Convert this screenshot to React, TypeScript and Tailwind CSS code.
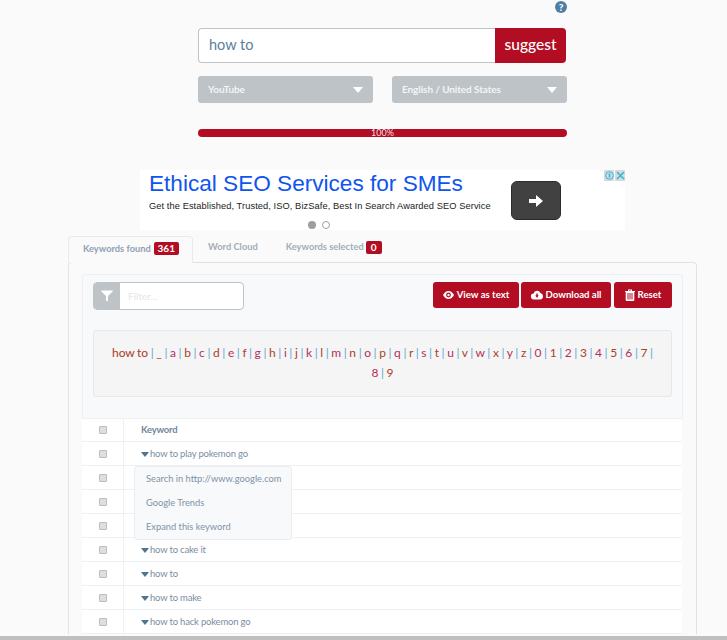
const letters = ['_', ...'abcdefghijklmnopqrstuvwxyz0123456789'.split('')]

const rows = ['how to play pokemon go', '', '', '', 'how to cake it', 'how to', 'how to make', 'how to hack pokemon go']

function Select({ label }: { label: string }) {
  return (
    <div className="flex h-[27px] w-[175px] items-center justify-between rounded-[3px] bg-[#bdc3c7] px-[10px] text-[10px] font-bold tracking-[-0.1px] text-[#f4f5f5]">
      <span>{label}</span>
      <span className="inline-block h-0 w-0 border-x-[5px] border-t-[6px] border-x-transparent border-t-white" />
    </div>
  )
}

function ActionButton({ icon, label, width }: { icon: React.ReactNode; label: string; width: string }) {
  return (
    <div className={`flex h-[26px] items-center justify-center gap-[3px] rounded-[3px] bg-[#b20d23] text-[9.6px] font-bold text-white ${width}`}>
      {icon}
      <span>{label}</span>
    </div>
  )
}

function CheckCell() {
  return (
    <div className="flex w-[42px] items-center justify-center border-r border-[#eef0f2]">
      <span className="h-[8px] w-[8px] rounded-[1px] border border-[#bdbdbd] bg-[#dedede]" />
    </div>
  )
}

export default function App() {
  return (
    <div className="relative h-[640px] w-[727px] overflow-hidden bg-[#fafafa] font-['Lato',sans-serif]">
      <div className="flex h-[28px] justify-end pr-[160px] pt-px">
        <span className="flex h-[12px] w-[12px] items-center justify-center rounded-full bg-[#4f7ea3] text-[10px] font-black leading-none text-white">?</span>
      </div>

      <div className="ml-[198px] flex h-[35px] w-[368px]">
        <div className="flex flex-1 items-center rounded-l-[4px] border border-r-0 border-[#bdc3c7] bg-white pb-[2px] pl-[10px] text-[14.5px] text-[#5b7f9c]">how to</div>
        <div className="flex w-[71px] items-center justify-center rounded-r-[4px] bg-[#b20d23] pb-[1px] text-[15.5px] font-medium text-white">suggest</div>
      </div>

      <div className="ml-[198px] mt-[13px] flex gap-[19px]">
        <Select label="YouTube" />
        <Select label="English / United States" />
      </div>

      <div className="ml-[198px] mt-[26px] flex h-[8px] w-[369px] items-center justify-center rounded-[4px] bg-[#b20d23] pb-[1px] text-[9px] leading-none text-[#f3dfe2]">100%</div>

      {/* ad */}
      <div className="relative ml-[140px] mt-[33px] h-[60px] w-[485px] bg-white font-['Liberation_Sans',sans-serif]">
        <div className="pl-[9px] pt-px text-[22.6px] leading-[26px] text-[#0f55f0]">Ethical SEO Services for SMEs</div>
        <div className="pl-[9px] pt-[3px] text-[9.3px] leading-[12px] tracking-[0.07px] text-[#222]">Get the Established, Trusted, ISO, BizSafe, Best In Search Awarded SEO Service</div>
        <div className="absolute left-[371px] top-[11px] flex h-[39px] w-[50px] items-center justify-center rounded-[6px] border border-[#2c2c2c] bg-[#414141]">
          <svg width="14" height="12" viewBox="0 0 14 12"><path d="M0 4h7V0l7 6-7 6V8H0z" fill="#fff" /></svg>
        </div>
        <div className="absolute left-[168px] top-[51px] flex gap-[6px]">
          <span className="h-[8px] w-[8px] rounded-full bg-[#9e9e9e]" />
          <span className="h-[8px] w-[8px] rounded-full border border-[#9e9e9e] bg-white" />
        </div>
        <div className="absolute right-0 top-0 flex gap-px">
          <span className="flex h-[11px] w-[10px] items-center justify-center bg-[#d5dbdd]">
            <svg width="9" height="9" viewBox="0 0 9 9" fill="none" stroke="#2fb8d6" strokeWidth="1"><circle cx="4.500" cy="4.500" r="3.800" /><path d="M4.500 2.500v4" strokeWidth="1.600" /></svg>
          </span>
          <span className="flex h-[11px] w-[10px] items-center justify-center bg-[#d5dbdd]">
            <svg width="9" height="9" viewBox="0 0 9 9" fill="none" stroke="#2fb8d6" strokeWidth="1.500"><path d="M1 1l7 7M8 1l-7 7" /></svg>
          </span>
        </div>
      </div>

      {/* tabs */}
      <div className="ml-[68px] mt-[6px] flex h-[26px] items-end text-[9.3px] font-bold text-[#a3adb8]">
        <div className="z-10 -mb-px flex h-[27px] w-[125px] items-center gap-[3px] rounded-t-[4px] border border-b-0 border-[#e6eaee] bg-[#fafafa] pb-[3px] pl-[14px] text-[#8ea1b5]">
          Keywords found
          <span className="w-[25px] rounded-[2px] bg-[#b20d23] text-center text-[10px] leading-[13px] text-white">361</span>
        </div>
        <div className="flex h-[27px] items-center pb-[3px] pl-[15px]">Word Cloud</div>
        <div className="flex h-[27px] items-center gap-[2px] pb-[3px] pl-[28px]">
          Keywords selected
          <span className="w-[16px] rounded-[2px] bg-[#b20d23] text-center text-[10px] leading-[13px] text-white">0</span>
        </div>
      </div>

      <div className="ml-[68px] w-[629px] rounded-t-[4px] border border-b-0 border-[#dfe3e6] bg-[#fafafa] px-[13px] pt-[11px]">
        <div className="rounded-t-[3px] border-x border-t border-[#eef1f4] bg-[#f8f9fb] px-[10px] pt-[7px]">
          <div className="flex items-start justify-between">
            <div className="flex h-[28px] w-[151px] rounded-[4px] border border-[#bdc3c7] bg-white">
              <div className="flex w-[26px] items-center justify-center rounded-l-[3px] bg-[#bdc3c7]">
                <svg width="12" height="12" viewBox="0 0 12 12"><path d="M0 1q0-.6.6-.6h10.800q.6 0 .6.6L7 6v5.600L5 10.500V6z" fill="#fff" /></svg>
              </div>
              <span className="pl-[8px] pt-[6px] text-[10px] text-[#e3e6ea]">Filter...</span>
            </div>
            <div className="flex">
              <ActionButton
                icon={<svg width="11" height="8" viewBox="0 0 11 8"><path d="M0 4c1.500-2.600 3.300-4 5.500-4S9.500 1.400 11 4c-1.500 2.600-3.300 4-5.500 4S1.500 6.600 0 4zm5.500 2.400a2.400 2.400 0 1 0 0-4.800 2.400 2.400 0 0 0 0 4.800z" fill="#fff" fillRule="evenodd" /><circle cx="5.500" cy="4" r="1.200" fill="#fff" /></svg>}
                label="View as text"
                width="w-[86px]"
              />
              <div className="w-[2px]" />
              <ActionButton
                icon={<svg width="12" height="10" viewBox="0 0 12 10"><path d="M3 9.500a3 3 0 0 1-.4-6A3.600 3.600 0 0 1 9.400 3a3.300 3.300 0 0 1-.4 6.500zM4.300 5.200 6 8l1.700-2.800H6.700V3.500H5.300v1.700z" fill="#fff" fillRule="evenodd" /></svg>}
                label="Download all"
                width="w-[90px]"
              />
              <div className="w-[3px]" />
              <ActionButton
                icon={<svg width="10" height="12" viewBox="0 0 10 12"><path d="M0 2h10v1H9.300v8a1 1 0 0 1-1 1H1.700a1 1 0 0 1-1-1V3H0zM3 .5h4V2H6V1.400H4V2H3zM2.500 4v6.500h1V4zm2 0v6.500h1V4zm2 0v6.500h1V4z" fill="#fff" fillRule="evenodd" /></svg>}
                label="Reset"
                width="w-[58px]"
              />
            </div>
          </div>

          <div className="mt-[20px] h-[67px] rounded-[3px] border border-[#e6e8ea] bg-[#f5f5f5] px-[15px] pt-[12px] text-center text-[12px] leading-[20px] text-[#b4404f] [word-spacing:-0.5px]">
            <span className="text-[#a83a28]">how to</span>
            {letters.map((l, i) => (
              <span key={l}>
                {' '}<span className="text-[#5da5d8]">|</span>{' '}
                <span className={i % 2 ? 'text-[#b3305a]' : 'text-[#a8431f]'}>{l}</span>
              </span>
            ))}
          </div>
          <div className="h-[21px]" />
        </div>

        <div className="relative w-[600px] bg-white text-[9.5px] tracking-[-0.2px] text-[#7b8ea1]">
          <div className="flex h-[24px] border-y border-[#eef0f2]">
            <CheckCell />
            <div className="flex items-center pl-[17px] pt-px font-bold text-[#71879b]">Keyword</div>
          </div>
          {rows.map((kw, i) => (
            <div key={i} className="flex h-[24px] border-b border-[#eef0f2]">
              <CheckCell />
              {kw && (
                <div className="flex items-center gap-px pl-[17px] pt-[2px]">
                  <span className="inline-block h-0 w-0 border-x-[4px] border-t-[5px] border-x-transparent border-t-[#4d7591]" />
                  <span>{kw}</span>
                </div>
              )}
            </div>
          ))}

          <div className="absolute left-[52px] top-[48px] flex h-[74px] w-[158px] flex-col rounded-[3px] border border-[#e9edf1] bg-[#f8f9fb] pl-[11px] text-[9.3px] tracking-normal text-[#8093a5]">
            <div className="flex h-[24px] items-center">Search in http://www.google.com</div>
            <div className="flex h-[24px] items-center">Google Trends</div>
            <div className="flex h-[24px] items-center">Expand this keyword</div>
          </div>
        </div>
      </div>

      {/* bottom edge of the browser window */}
      <div className="absolute bottom-0 left-0 h-[4px] w-full bg-[#bfbfbf]" />
    </div>
  )
}
